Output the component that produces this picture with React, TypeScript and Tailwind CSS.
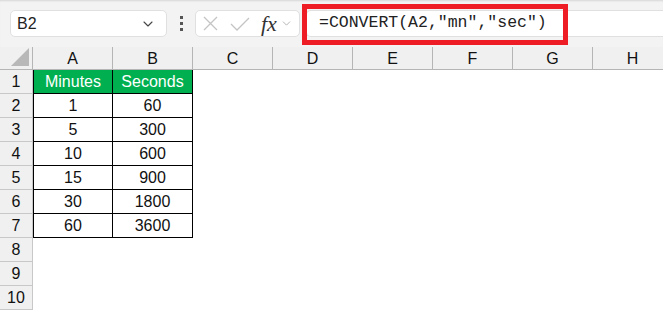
import { ChevronDown } from "lucide-react";

const cols = ["A", "B", "C", "D", "E", "F", "G", "H"];
const data: [string, string][] = [
  ["1", "60"],
  ["5", "300"],
  ["10", "600"],
  ["15", "900"],
  ["30", "1800"],
  ["60", "3600"],
];

function TopBar() {
  return (
    <div className="relative flex h-[47px] items-start bg-[#f3f3f3] pt-[10px] shadow-[inset_0_2px_2px_-1px_rgba(0,0,0,0.12)]">
      <div className="ml-[10px] flex h-[27px] w-[157px] items-center justify-between rounded-[5px] border border-[#e0e0e0] bg-white pl-[6px] pr-[10px]">
        <span className="font-['Liberation_Sans',sans-serif] text-[16px] text-[#222]">B2</span>
        <ChevronDown className="h-[16px] w-[16px] text-[#444]" strokeWidth={1.6} />
      </div>
      <div className="ml-[12px] flex h-[27px] w-[4px] flex-col items-center justify-center gap-[3px]">
        <span className="h-[3px] w-[3px] bg-[#555]" />
        <span className="h-[3px] w-[3px] bg-[#555]" />
        <span className="h-[3px] w-[3px] bg-[#555]" />
      </div>
      <div className="ml-[12px] flex h-[27px] w-[105px] items-center rounded-[5px] border border-[#e0e0e0] bg-white pl-[7px]">
        <svg width="15" height="15" viewBox="0 0 15 15" className="text-[#c4c4c4]">
          <path d="M1 1L14 14M14 1L1 14" stroke="currentColor" strokeWidth="1.3" fill="none" />
        </svg>
        <svg width="20" height="14" viewBox="0 0 20 14" className="ml-[12px] text-[#c4c4c4]">
          <path d="M1 7L7 13L19 1" stroke="currentColor" strokeWidth="1.3" fill="none" />
        </svg>
        <span className="ml-[11px] font-['Liberation_Serif',serif] text-[22px] italic leading-none text-[#333]">
          fx
        </span>
        <ChevronDown className="ml-[3px] h-[13px] w-[13px] text-[#aaa]" strokeWidth={1.6} />
      </div>
      <div className="ml-[6px] flex h-[27px] flex-1 items-center rounded-l-[5px] border border-r-0 border-[#e0e0e0] bg-white pl-[12px]">
        <span className="font-['Liberation_Mono',monospace] text-[16.5px] text-[#222]">
          =CONVERT(A2,"mn","sec")
        </span>
      </div>
      <div className="pointer-events-none absolute left-[302px] top-[4px] h-[41px] w-[266px] border-[5px] border-[#ee1c25]" />
    </div>
  );
}

function Sheet() {
  return (
    <div className="grid grid-cols-[33px_repeat(8,80px)] grid-rows-[23px_repeat(10,24px)] bg-white font-['Liberation_Sans',sans-serif] text-[16px] text-[#111]">
      <div className="relative border-b border-r border-[#b5b5b5] bg-[#f0f0f0]">
        <svg className="absolute bottom-[3px] right-[3px]" width="18" height="18" viewBox="0 0 18 18">
          <polygon points="18,0 18,18 0,18" fill="#b8b8b8" />
        </svg>
      </div>
      {cols.map((c) => (
        <div
          key={c}
          className="flex items-center justify-center border-b border-r border-[#b5b5b5] bg-[#f0f0f0] pt-[2px]"
        >
          {c}
        </div>
      ))}
      {Array.from({ length: 10 }, (_, i) => {
        const row = i + 1;
        return (
          <div key={row} className="contents">
            <div className="flex items-center justify-center border-b border-r border-[#c8c8c8] bg-[#f0f0f0]">
              {row}
            </div>
            {cols.map((c, ci) => {
              if (ci > 1) return <div key={c} />;
              if (row === 1) {
                return (
                  <div
                    key={c}
                    className={`flex items-center justify-center border-b border-r border-black bg-[#00b050] text-white ${ci === 0 ? "border-l" : ""}`}
                  >
                    {ci === 0 ? "Minutes" : "Seconds"}
                  </div>
                );
              }
              if (row <= 7) {
                return (
                  <div
                    key={c}
                    className={`flex items-center justify-center border-b border-r border-black ${ci === 0 ? "border-l" : ""}`}
                  >
                    {data[row - 2][ci]}
                  </div>
                );
              }
              return <div key={c} />;
            })}
          </div>
        );
      })}
    </div>
  );
}

export default function App() {
  return (
    <div className="h-[310px] w-[663px] overflow-hidden bg-white">
      <TopBar />
      <Sheet />
    </div>
  );
}
